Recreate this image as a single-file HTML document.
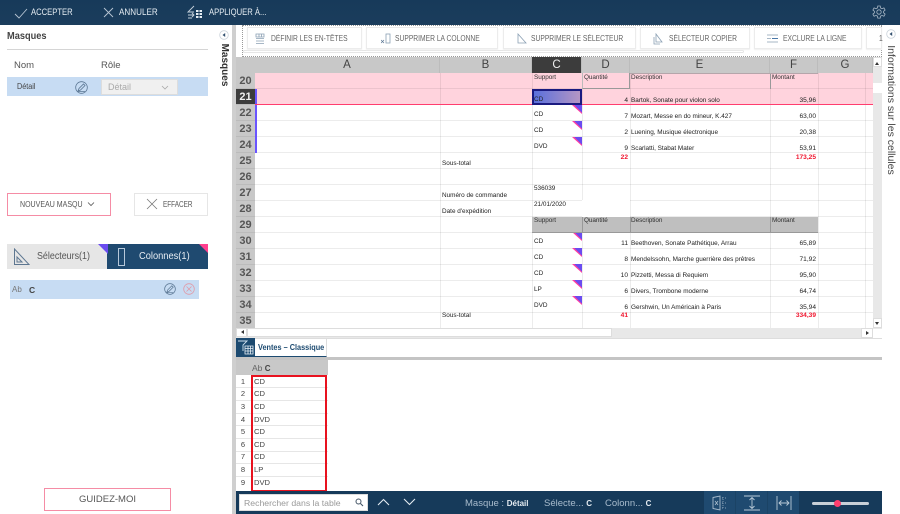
<!DOCTYPE html>
<html lang="fr"><head><meta charset="utf-8"><title>Masques</title>
<style>
html,body{margin:0;padding:0;width:900px;height:514px;overflow:hidden;background:#fff}
body{position:relative;font-family:"Liberation Sans",sans-serif;color:#333}
div,span,svg{position:absolute;box-sizing:border-box}
.t{white-space:nowrap;line-height:10px;height:10px}
.g{font-size:6.4px;color:#222;margin-top:1px}
.s{font-size:6.4px;color:#333;letter-spacing:-.05px;margin-top:1px}
.n{font-size:6.6px;color:#222;text-align:right;width:40px;margin-top:1px}
.r{font-size:6.6px;color:#f0142d;font-weight:bold;text-align:right;width:40px;margin-top:1px}
.rh{left:236px;width:19px;height:16px;background:#c8c8c8;border-bottom:1px solid #bbb;text-align:center;font-size:11px;line-height:16px;color:#555;font-weight:bold}
.ch{top:57px;height:16px;background:#c8c8c8;border-right:1px solid #bcbcbc;text-align:center;font-size:11.5px;line-height:16px;color:#444}
.vl{top:73px;width:1px;height:256px;background:rgba(0,0,0,.075)}
.tri{width:10px;height:9px;left:572px;clip-path:polygon(0 0,100% 0,100% 100%);background:linear-gradient(45deg,#ff3fa0 0 60%,#6a4cf0 60% 100%)}
.tb{top:27px;height:22px;background:#fff;border:1px solid #ececec;box-shadow:0 1px 1px #f0f0f0}
.tbt{top:34px;font-size:8px;color:#666;white-space:nowrap;line-height:10px;transform:scaleX(.84);transform-origin:left}
.dr{left:254px;font-size:7.6px;color:#444;line-height:10px}
.dn{left:236px;width:14px;text-align:center;font-size:7.6px;color:#444;line-height:10px}
.dl{left:236px;width:92px;height:1px;background:#e6e6e6}
.sx{transform-origin:left}
</style></head><body>

<!-- Top bar -->
<div style="left:0;top:0;width:900px;height:25px;background:linear-gradient(#173a5a,#1b3d5c)"></div>
<svg style="left:14px;top:5px" width="14" height="14" viewBox="0 0 14 14"><path d="M1 9 L5 13 L13 4" fill="none" stroke="#b8c6d4" stroke-width=".9"/></svg>
<div class="t sx" style="left:31px;top:7px;font-size:9px;color:#e6edf3;transform:scaleX(.85)">ACCEPTER</div>
<svg style="left:103px;top:7px" width="11" height="11" viewBox="0 0 11 11"><path d="M1 1 L10 10 M10 1 L1 10" stroke="#b8c6d4" stroke-width=".9"/></svg>
<div class="t sx" style="left:119px;top:7px;font-size:9px;color:#e6edf3;transform:scaleX(.9)">ANNULER</div>
<svg style="left:187px;top:5px" width="18" height="15" viewBox="0 0 18 15"><path d="M7 1 L1 7 L7 7 M1 10 L7 10 M5 8 L7 10 L5 12 M1 13 L5 13" fill="none" stroke="#c4d0db" stroke-width=".9"/><path d="M9 5h2.500v2h-2.500zM12.500 5h2.500v2h-2.500zM9 8h2.500v2h-2.500zM12.500 8h2.500v2h-2.500zM9 11h2.500v2h-2.500zM12.500 11h2.500v2h-2.500z" fill="#e6edf3"/></svg>
<div class="t sx" style="left:209px;top:7px;font-size:9px;color:#e6edf3;transform:scaleX(.85)">APPLIQUER À...</div>
<svg style="left:872px;top:5px" width="14" height="15" viewBox="0 0 14 15"><path d="M5.800 1h2.400l.4 2 1.400.7 1.900-.8 1.200 2.100-1.500 1.300v1.500l1.500 1.300-1.200 2.100-1.900-.8-1.400.7-.4 2H5.800l-.4-2-1.400-.7-1.900.8L.9 9.100l1.500-1.300V6.300L.9 5l1.200-2.100 1.900.8 1.400-.7z" fill="none" stroke="#a9b8c6" stroke-width=".8"/><circle cx="7" cy="7" r="2.200" fill="none" stroke="#a9b8c6" stroke-width=".8"/></svg>

<!-- Left panel -->
<div class="t sx" style="left:7px;top:31px;font-size:10.500px;font-weight:bold;color:#444;transform:scaleX(.88)">Masques</div>
<div style="left:7px;top:49px;width:201px;height:1px;background:#d5d5d5"></div>
<div class="t" style="left:14px;top:61px;font-size:9.500px;color:#555">Nom</div>
<div class="t" style="left:101px;top:61px;font-size:9.500px;color:#555">Rôle</div>
<div style="left:7px;top:77px;width:201px;height:19px;background:#c7dcf3"></div>
<div class="t sx" style="left:17px;top:82px;font-size:8px;color:#444;transform:scaleX(.9)">Détail</div>
<svg style="left:75px;top:81px" width="13" height="13" viewBox="0 0 13 13"><circle cx="6.500" cy="6.500" r="5.800" fill="none" stroke="#5a7693" stroke-width=".8"/><path d="M3 10 L4 7.500 L8.500 3 L10 4.500 L5.500 9 Z M3 10.500 H10" fill="none" stroke="#5a7693" stroke-width=".8"/></svg>
<div style="left:101px;top:79px;width:77px;height:16px;background:#f0f0f0;border:1px solid #ddd"></div>
<div class="t" style="left:108px;top:82px;font-size:9px;color:#aaa">Détail</div>
<svg style="left:161px;top:85px" width="8" height="5" viewBox="0 0 8 5"><path d="M1 1 L4 4 L7 1" fill="none" stroke="#aaa" stroke-width=".8"/></svg>

<div style="left:7px;top:193px;width:104px;height:23px;border:1px solid #f58ca5;background:#fff"></div>
<div class="t sx" style="left:20px;top:200px;font-size:8px;color:#555;transform:scaleX(.88)">NOUVEAU MASQU</div>
<svg style="left:87px;top:202px" width="8" height="5" viewBox="0 0 8 5"><path d="M1 .5 L4 3.500 L7 .5" fill="none" stroke="#555" stroke-width=".8"/></svg>
<div style="left:134px;top:193px;width:74px;height:23px;border:1px solid #e6e6e6;background:#fff"></div>
<svg style="left:146px;top:198px" width="12" height="12" viewBox="0 0 12 12"><path d="M1 1 L11 11 M11 1 L1 11" stroke="#777" stroke-width=".8"/></svg>
<div class="t sx" style="left:163px;top:200px;font-size:8px;color:#555;transform:scaleX(.8)">EFFACER</div>

<div style="left:7px;top:244px;width:100px;height:25px;background:#e6e6e6"></div>
<div style="left:107px;top:244px;width:101px;height:25px;background:#1f4a70"></div>
<div style="left:98px;top:244px;width:10px;height:10px;background:#6a4cf0;clip-path:polygon(0 0,100% 0,100% 100%)"></div>
<div style="left:199px;top:244px;width:9px;height:9px;background:#ff3f8e;clip-path:polygon(0 0,100% 0,100% 100%)"></div>
<svg style="left:13px;top:248px" width="17" height="18" viewBox="0 0 17 18"><path d="M1.500 1 V16.500 H16 Z M4 9 V14 H9 Z" fill="none" stroke="#5d7690" stroke-width="1"/></svg>
<div class="t sx" style="left:37px;top:252px;font-size:10px;color:#555;transform:scaleX(.89)">Sélecteurs(1)</div>
<div style="left:118px;top:248px;width:7px;height:18px;border:1px solid #b6c8da"></div>
<div class="t sx" style="left:139px;top:252px;font-size:10px;color:#e8eef4;transform:scaleX(.93)">Colonnes(1)</div>

<div style="left:10px;top:280px;width:189px;height:19px;background:#c7dcf3"></div>
<div class="t" style="left:12px;top:285px;font-size:8px;color:#777">Ab</div>
<div class="t" style="left:29px;top:285px;font-size:8.500px;font-weight:bold;color:#444">C</div>
<svg style="left:164px;top:283px" width="12" height="12" viewBox="0 0 13 13"><circle cx="6.500" cy="6.500" r="5.800" fill="none" stroke="#5a7693" stroke-width=".8"/><path d="M3 10 L4 7.500 L8.500 3 L10 4.500 L5.500 9 Z M3 10.500 H10" fill="none" stroke="#5a7693" stroke-width=".8"/></svg>
<svg style="left:183px;top:283px" width="12" height="12" viewBox="0 0 12 12"><circle cx="6" cy="6" r="5.300" fill="none" stroke="#e09aa8" stroke-width=".8"/><path d="M3.500 3.500 L8.500 8.500 M8.500 3.500 L3.500 8.500" stroke="#e09aa8" stroke-width=".8"/></svg>

<div style="left:44px;top:488px;width:127px;height:23px;border:1px solid #f58ca5;background:#fff"></div>
<div class="t" style="left:44px;top:495px;width:127px;text-align:center;font-size:9.500px;color:#555">GUIDEZ-MOI</div>

<!-- Masques strip -->
<svg style="left:219px;top:30px" width="10" height="10" viewBox="0 0 10 10"><circle cx="5" cy="5" r="4.300" fill="#fff" stroke="#cbd3da" stroke-width=".8"/><path d="M6.200 3 L3.500 5 L6.200 7 Z" fill="#33516f"/></svg>
<div class="t" style="left:199px;top:60px;width:50px;text-align:center;font-size:10px;font-weight:bold;color:#333;transform:rotate(90deg);height:10px">Masques</div>
<div style="left:232px;top:25px;width:4px;height:489px;background:#cfcfcf"></div>

<!-- Toolbar -->
<div style="left:242px;top:25px;width:640px;height:32px;border:1px dotted #999;background:#fff"></div>
<div style="left:243px;top:50px;width:501px;height:3px;background:#fff;border:1px solid #e6e6e6;border-radius:2px"></div>
<div class="tb" style="left:247px;width:115px"></div>
<div class="tb" style="left:366px;width:132px"></div>
<div class="tb" style="left:503px;width:133px"></div>
<div class="tb" style="left:640px;width:110px"></div>
<div class="tb" style="left:754px;width:108px"></div>
<div class="tb" style="left:866px;width:16px"></div>
<svg style="left:255px;top:33px" width="10" height="11" viewBox="0 0 10 11"><path d="M1 1h8v3H1zM1 5.500h8M1 8h8M1 10.500h8M4 1v3M6.500 1v3" fill="none" stroke="#8ba0b4" stroke-width=".8"/></svg>
<div class="tbt" style="left:271px">DÉFINIR LES EN-TÊTES</div>
<svg style="left:381px;top:33px" width="10" height="11" viewBox="0 0 10 11"><path d="M0 7 L3 10 M3 7 L0 10" stroke="#5a7693" stroke-width=".7"/><rect x="5" y="1" width="4" height="9" fill="none" stroke="#8ba0b4" stroke-width=".8"/></svg>
<div class="tbt" style="left:395px">SUPPRIMER LA COLONNE</div>
<svg style="left:516px;top:33px" width="11" height="11" viewBox="0 0 11 11"><path d="M2 1 V10 H10 Z" fill="none" stroke="#8ba0b4" stroke-width=".8"/></svg>
<div class="tbt" style="left:531px">SUPPRIMER LE SÉLECTEUR</div>
<svg style="left:653px;top:33px" width="11" height="12" viewBox="0 0 11 12"><path d="M3 1 V9 H9 Z M1 4 V11 H7" fill="none" stroke="#8ba0b4" stroke-width=".8"/></svg>
<div class="tbt" style="left:669px">SÉLECTEUR COPIER</div>
<svg style="left:767px;top:34px" width="11" height="9" viewBox="0 0 11 9"><path d="M0 1h11M0 8h11M0 4.500h4" stroke="#8ba0b4" stroke-width=".8"/><path d="M5 4.500h6" stroke="#4a78a8" stroke-width="1"/></svg>
<div class="tbt" style="left:783px">EXCLURE LA LIGNE</div>
<div class="tbt" style="left:879px">1</div>

<!-- Grid -->
<div style="left:236px;top:57px;width:19px;height:16px;background:#c8c8c8"></div>
<div class="ch" style="left:255px;width:185px">A</div>
<div class="ch" style="left:440px;width:92px">B</div>
<div class="ch" style="left:532px;width:50px;background:#3c3c3c;color:#eee">C</div>
<div class="ch" style="left:582px;width:48px">D</div>
<div class="ch" style="left:630px;width:140px">E</div>
<div class="ch" style="left:770px;width:48px">F</div>
<div class="ch" style="left:818px;width:55px">G</div>

<div style="left:255px;top:73px;width:618px;height:32px;background:#ffd3dd"></div>
<div style="left:255px;top:73px;width:618px;height:256px;background:repeating-linear-gradient(to bottom,transparent 0 15px,rgba(0,0,0,.075) 15px 16px)"></div>
<div class="vl" style="left:440px"></div>
<div class="vl" style="left:532px"></div>
<div class="vl" style="left:582px"></div>
<div class="vl" style="left:630px"></div>
<div class="vl" style="left:770px"></div>
<div class="vl" style="left:818px"></div>
<div class="vl" style="left:865px"></div>

<div class="rh" style="top:73px">20</div>
<div class="rh" style="top:89px;background:#3c3c3c;color:#eee">21</div>
<div class="rh" style="top:105px">22</div>
<div class="rh" style="top:121px">23</div>
<div class="rh" style="top:137px">24</div>
<div class="rh" style="top:153px">25</div>
<div class="rh" style="top:169px">26</div>
<div class="rh" style="top:185px">27</div>
<div class="rh" style="top:201px">28</div>
<div class="rh" style="top:217px">29</div>
<div class="rh" style="top:233px">30</div>
<div class="rh" style="top:249px">31</div>
<div class="rh" style="top:265px">32</div>
<div class="rh" style="top:281px">33</div>
<div class="rh" style="top:297px">34</div>
<div class="rh" style="top:313px">35</div>
<div style="left:255px;top:89px;width:2px;height:64px;background:#6a55ff"></div>
<div style="left:255px;top:104px;width:618px;height:1px;background:#ff3d6e"></div>

<!-- Row 20 header borders -->
<div style="left:582px;top:73px;width:48px;height:16px;border-right:1px solid #999;border-bottom:1px solid #999;border-left:1px solid #bbb"></div>
<div style="left:770px;top:73px;width:1px;height:16px;background:#999"></div>
<div style="left:630px;top:73px;width:188px;height:1px;background:#b5a5aa"></div>
<div class="t s" style="left:534px;top:72px">Support</div>
<div class="t s" style="left:584px;top:72px">Quantité</div>
<div class="t s" style="left:631px;top:72px">Description</div>
<div class="t s" style="left:772px;top:72px">Montant</div>

<div style="left:532px;top:89px;width:50px;height:16px;background:linear-gradient(90deg,#5a70dc,#b596c4);border:2px solid #1a1a80"></div>
<div class="t g" style="left:534px;top:94px">CD</div>

<div class="tri" style="top:105px"></div><div class="tri" style="top:121px"></div><div class="tri" style="top:137px"></div>
<div class="tri" style="top:232px"></div><div class="tri" style="top:248px"></div><div class="tri" style="top:264px"></div><div class="tri" style="top:280px"></div><div class="tri" style="top:296px"></div>

<div class="t n" style="left:588px;top:95px">4</div><div class="t g" style="left:631px;top:95px">Bartok, Sonate pour violon solo</div><div class="t n" style="left:776px;top:95px">35,96</div>
<div class="t g" style="left:534px;top:109px">CD</div><div class="t n" style="left:588px;top:111px">7</div><div class="t g" style="left:631px;top:111px">Mozart, Messe en do mineur, K.427</div><div class="t n" style="left:776px;top:111px">63,00</div>
<div class="t g" style="left:534px;top:125px">CD</div><div class="t n" style="left:588px;top:127px">2</div><div class="t g" style="left:631px;top:127px">Luening, Musique électronique</div><div class="t n" style="left:776px;top:127px">20,38</div>
<div class="t g" style="left:534px;top:141px">DVD</div><div class="t n" style="left:588px;top:143px">9</div><div class="t g" style="left:631px;top:143px">Scarlatti, Stabat Mater</div><div class="t n" style="left:776px;top:143px">53,91</div>
<div class="t r" style="left:588px;top:152px">22</div><div class="t r" style="left:776px;top:152px">173,25</div>
<div class="t g" style="left:442px;top:158px">Sous-total</div>
<div class="t g" style="left:534px;top:183px">536039</div>
<div class="t g" style="left:442px;top:190px">Numéro de commande</div>
<div class="t g" style="left:534px;top:199px">21/01/2020</div>
<div class="t g" style="left:442px;top:206px">Date d'expédition</div>
<div style="left:582px;top:200px;width:48px;height:17px;background:#fff"></div>
<div style="left:532px;top:217px;width:286px;height:16px;background:#bfbfbf;border-bottom:1px solid #999"></div>
<div style="left:582px;top:217px;width:1px;height:16px;background:#999"></div><div style="left:630px;top:217px;width:1px;height:16px;background:#999"></div><div style="left:770px;top:217px;width:1px;height:16px;background:#999"></div>
<div class="t s" style="left:534px;top:215px">Support</div><div class="t s" style="left:584px;top:215px">Quantité</div><div class="t s" style="left:631px;top:215px">Description</div><div class="t s" style="left:772px;top:215px">Montant</div>

<div class="t g" style="left:534px;top:236px">CD</div><div class="t n" style="left:588px;top:238px">11</div><div class="t g" style="left:631px;top:238px">Beethoven, Sonate Pathétique, Arrau</div><div class="t n" style="left:776px;top:238px">65,89</div>
<div class="t g" style="left:534px;top:252px">CD</div><div class="t n" style="left:588px;top:254px">8</div><div class="t g" style="left:631px;top:254px">Mendelssohn, Marche guerrière des prêtres</div><div class="t n" style="left:776px;top:254px">71,92</div>
<div class="t g" style="left:534px;top:268px">CD</div><div class="t n" style="left:588px;top:270px">10</div><div class="t g" style="left:631px;top:270px">Pizzetti, Messa di Requiem</div><div class="t n" style="left:776px;top:270px">95,90</div>
<div class="t g" style="left:534px;top:284px">LP</div><div class="t n" style="left:588px;top:286px">6</div><div class="t g" style="left:631px;top:286px">Divers, Trombone moderne</div><div class="t n" style="left:776px;top:286px">64,74</div>
<div class="t g" style="left:534px;top:300px">DVD</div><div class="t n" style="left:588px;top:302px">6</div><div class="t g" style="left:631px;top:302px">Gershwin, Un Américain à Paris</div><div class="t n" style="left:776px;top:302px">35,94</div>
<div class="t g" style="left:442px;top:310px">Sous-total</div><div class="t r" style="left:588px;top:310px">41</div><div class="t r" style="left:776px;top:310px">334,39</div>

<!-- Scrollbars -->
<div style="left:873px;top:57px;width:9px;height:272px;background:#e8e8e8"></div>
<div style="left:873px;top:57px;width:9px;height:10px;background:#fff;border:1px solid #ddd"></div>
<div style="left:875px;top:60px;width:0;height:0;border:2.500px solid transparent;border-bottom:3px solid #333"></div>
<div style="left:873px;top:83px;width:9px;height:10px;background:#fff"></div>
<div style="left:873px;top:318px;width:9px;height:10px;background:#fff;border:1px solid #ddd"></div>
<div style="left:875px;top:322px;width:0;height:0;border:2.500px solid transparent;border-top:3px solid #333"></div>
<div style="left:236px;top:328px;width:637px;height:10px;background:#e8e8e8"></div>
<div style="left:247px;top:328px;width:365px;height:9px;background:#fff;border:1px solid #ddd"></div>
<div style="left:236px;top:328px;width:11px;height:9px;background:#fff;border:1px solid #ddd"></div>
<div style="left:239px;top:330px;width:0;height:0;border:2.500px solid transparent;border-right:3px solid #333"></div>
<div style="left:861px;top:328px;width:12px;height:10px;background:#fff;border:1px solid #ddd"></div>
<div style="left:866px;top:331px;width:0;height:0;border:2.500px solid transparent;border-left:3px solid #333"></div>

<!-- Right strip -->
<svg style="left:886px;top:29px" width="10" height="10" viewBox="0 0 10 10"><circle cx="5" cy="5" r="4.300" fill="#fff" stroke="#cbd3da" stroke-width=".8"/><path d="M6.200 3 L3.500 5 L6.200 7 Z" fill="#33516f"/></svg>
<div class="t" style="left:826px;top:105px;width:130px;text-align:center;font-size:10.500px;color:#444;transform:rotate(90deg)">Informations sur les cellules</div>

<!-- Tab strip -->
<div style="left:236px;top:338px;width:646px;height:19px;background:#fff;border-top:1px solid #ddd"></div>
<div style="left:236px;top:338px;width:19px;height:19px;background:#1c4a70"></div>
<svg style="left:237px;top:340px" width="17" height="15" viewBox="0 0 17 15"><path d="M1 1 H10 L6 5 V11" fill="none" stroke="#cfe0ee" stroke-width=".9"/><path d="M8 6h8v8H8zM8 8.500h8M8 11h8M11 6v8M13.500 6v8" fill="none" stroke="#e8f0f6" stroke-width=".8"/></svg>
<div style="left:255px;top:338px;width:72px;height:19px;border-right:1px solid #ddd;border-bottom:1px solid #1c4a70"></div>
<div class="t sx" style="left:258px;top:342px;font-size:8.500px;font-weight:bold;color:#1c4a70;transform:scaleX(.86)">Ventes – Classique</div>
<div style="left:236px;top:357px;width:646px;height:3px;background:#c4c4c4"></div>

<!-- Data table -->
<div style="left:236px;top:360px;width:92px;height:15px;background:#c8c8c8"></div>
<div class="t" style="left:252px;top:363px;font-size:8.500px;color:#666">Ab <b style="color:#444;font-size:8px">C</b></div>
<div class="dl" style="top:387px"></div><div class="dl" style="top:400px"></div><div class="dl" style="top:413px"></div><div class="dl" style="top:425px"></div><div class="dl" style="top:438px"></div><div class="dl" style="top:451px"></div><div class="dl" style="top:463px"></div><div class="dl" style="top:476px"></div>
<div class="t dn" style="top:377px">1</div><div class="t dr" style="top:377px">CD</div>
<div class="t dn" style="top:389px">2</div><div class="t dr" style="top:389px">CD</div>
<div class="t dn" style="top:402px">3</div><div class="t dr" style="top:402px">CD</div>
<div class="t dn" style="top:415px">4</div><div class="t dr" style="top:415px">DVD</div>
<div class="t dn" style="top:427px">5</div><div class="t dr" style="top:427px">CD</div>
<div class="t dn" style="top:440px">6</div><div class="t dr" style="top:440px">CD</div>
<div class="t dn" style="top:452px">7</div><div class="t dr" style="top:452px">CD</div>
<div class="t dn" style="top:465px">8</div><div class="t dr" style="top:465px">LP</div>
<div class="t dn" style="top:478px">9</div><div class="t dr" style="top:478px">DVD</div>
<div style="left:251px;top:375px;width:76px;height:117px;border:2px solid #e8121f"></div>

<!-- Bottom bar -->
<div style="left:236px;top:491px;width:646px;height:23px;background:#163a5a"></div>
<div style="left:239px;top:494px;width:129px;height:17px;background:#fff;border:1px solid #ddd"></div>
<div class="t" style="left:244px;top:498px;font-size:8.700px;color:#999">Rechercher dans la table</div>
<svg style="left:355px;top:498px" width="9" height="9" viewBox="0 0 9 9"><circle cx="3.500" cy="3.500" r="2.500" fill="none" stroke="#456" stroke-width="1"/><path d="M5.500 5.500 L8 8" stroke="#456" stroke-width="1.100"/></svg>
<svg style="left:377px;top:498px" width="13" height="8" viewBox="0 0 13 8"><path d="M1 7 L6.500 1.500 L12 7" fill="none" stroke="#e4ebf1" stroke-width="1.100"/></svg>
<svg style="left:403px;top:498px" width="13" height="8" viewBox="0 0 13 8"><path d="M1 1 L6.500 6.500 L12 1" fill="none" stroke="#e4ebf1" stroke-width="1.100"/></svg>
<div class="t" style="left:465px;top:499px;font-size:9.500px;color:#a9bccd">Masque : <b style="font-size:8px;color:#e4ebf1">Détail</b></div>
<div class="t" style="left:544px;top:499px;font-size:9.500px;color:#a9bccd">Sélecte... <b style="font-size:8px;color:#e4ebf1">C</b></div>
<div class="t" style="left:605px;top:499px;font-size:9.500px;color:#a9bccd">Colonn... <b style="font-size:8px;color:#e4ebf1">C</b></div>
<div style="left:704px;top:491px;width:95px;height:23px;background:#1f4a70"></div>
<div style="left:735px;top:491px;width:1px;height:23px;background:#1b4365"></div>
<div style="left:767px;top:491px;width:1px;height:23px;background:#1b4365"></div>
<svg style="left:712px;top:495px" width="16" height="16" viewBox="0 0 16 16"><path d="M1 2.500 L8 1 V15 L1 13.500 Z" fill="none" stroke="#a9bccd" stroke-width=".9"/><path d="M3 6 L6 10 M6 6 L3 10" stroke="#a9bccd" stroke-width=".8"/><path d="M10 3h1M13 3h1M10 8h1M13 8h1M10 13h1M13 13h1M11 2v12" stroke="#a9bccd" stroke-width=".7" stroke-dasharray="1 1" fill="none"/></svg>
<svg style="left:744px;top:495px" width="16" height="16" viewBox="0 0 16 16"><path d="M0 1 H16 M0 15 H16 M8 2.500 V13.500 M5.500 5 L8 2.500 L10.500 5 M5.500 11 L8 13.500 L10.500 11" fill="none" stroke="#b9c9d7" stroke-width=".9"/></svg>
<svg style="left:776px;top:495px" width="16" height="16" viewBox="0 0 16 16"><path d="M1 1 V15 M15 1 V15 M3 8 H13 M5.500 5.500 L3 8 L5.500 10.500 M10.500 5.500 L13 8 L10.500 10.500" fill="none" stroke="#b9c9d7" stroke-width=".9"/></svg>
<div style="left:812px;top:502px;width:57px;height:3px;background:#c8d0d8;border-radius:2px"></div>
<div style="left:834px;top:500px;width:7px;height:7px;background:#ff3d6e;border-radius:50%"></div>
</body></html>
